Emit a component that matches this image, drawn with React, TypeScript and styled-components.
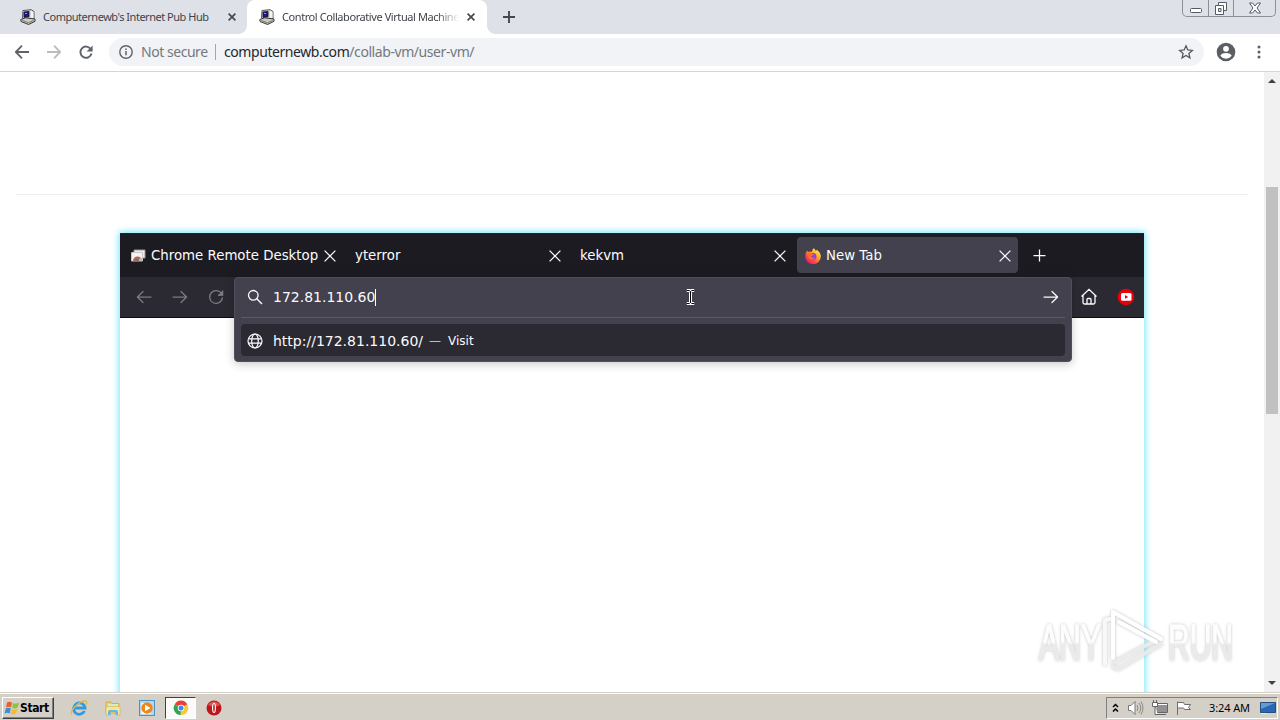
import React from "react";
import styled, { createGlobalStyle, css } from "styled-components";

const GlobalStyle = createGlobalStyle`
  * { box-sizing: border-box; }
  body { margin: 0; overflow: hidden; background: #fff; }
  svg { display: block; flex: none; }
`;

const ui = `"DejaVu Sans Condensed", "DejaVu Sans", sans-serif`;
const guest = `"DejaVu Sans", sans-serif`;

const Screen = styled.div`
  position: relative;
  width: 1280px;
  height: 720px;
  display: flex;
  flex-direction: column;
  overflow: hidden;
`;

/* ---------- Outer browser ---------- */
const TabStrip = styled.header`
  height: 34px;
  flex: none;
  display: flex;
  align-items: stretch;
  background: #dee1e8;
  padding-left: 8px;
`;
const BrowserTab = styled.div<{ $active?: boolean }>`
  position: relative;
  width: ${(p) => (p.$active ? 240 : 239)}px;
  display: flex;
  align-items: center;
  padding: 0 ${(p) => (p.$active ? 12 : 11)}px 0 12px;
  gap: 7px;
  border-radius: 8px 8px 0 0;
  background: ${(p) => (p.$active ? "#fff" : "transparent")};
  ${(p) =>
    p.$active &&
    css`
      &::before,
      &::after {
        content: "";
        position: absolute;
        bottom: 0;
        width: 8px;
        height: 8px;
      }
      &::before {
        left: -8px;
        background: radial-gradient(circle at 0 0, transparent 7.5px, #fff 8px);
      }
      &::after {
        right: -8px;
        background: radial-gradient(circle at 100% 0, transparent 7.5px, #fff 8px);
      }
    `}
`;
const TabLabel = styled.span<{ $track: number; $fade?: boolean }>`
  flex: 1;
  min-width: 0;
  overflow: hidden;
  white-space: nowrap;
  font: 11px/18px "Noto Sans", sans-serif;
  letter-spacing: ${(p) => p.$track}px;
  color: #40444a;
  ${(p) =>
    p.$fade &&
    css`
      mask-image: linear-gradient(to right, #000 155px, transparent 177px);
    `}
`;
const NewTab = styled.div`
  display: flex;
  align-items: center;
  margin-left: 15px;
`;
const Captions = styled.div`
  margin-left: auto;
  margin-right: 4px;
  height: 17px;
  width: 94px;
  display: flex;
  border: 1px solid #8b9099;
  border-top: 0;
  border-radius: 0 0 5px 5px;
`;
const Caption = styled.div<{ $w: number }>`
  width: ${(p) => p.$w}px;
  display: flex;
  justify-content: center;
  & + & { border-left: 1px solid #8b9099; }
`;
const Toolbar = styled.div`
  height: 38px;
  flex: none;
  display: flex;
  align-items: center;
  padding: 0 12px 2px 12px;
  background: #fff;
  border-bottom: 1px solid #d4d5d7;
`;
const ToolButton = styled.div<{ $w?: number }>`
  width: ${(p) => p.$w ?? 32}px;
  flex: none;
  display: flex;
  justify-content: center;
`;
const Omnibox = styled.div`
  width: 1095px;
  flex: none;
  height: 28px;
  margin-left: 13px;
  border-radius: 14px;
  background: #f1f3f6;
  display: flex;
  align-items: center;
  padding: 0 10px 0 9px;
  font: 14px/20px "Noto Sans", sans-serif;
  color: #74787c;
  white-space: nowrap;
`;
const Secure = styled.span`
  margin-left: 7px;
  width: 67px;
  letter-spacing: -0.46px;
`;
const Divider = styled.i`
  width: 1px;
  height: 16px;
  margin: 0 8px 0 7px;
  background: #a3a6aa;
`;
const Address = styled.span`
  flex: 1;
  letter-spacing: -0.43px;
`;
const Host = styled.span`
  color: #24272b;
`;

/* ---------- Web page ---------- */
const Viewport = styled.main`
  flex: 1;
  min-height: 0;
  display: flex;
`;
const Page = styled.div`
  width: 1264px;
  padding: 122px 16px 0;
  overflow: hidden;
`;
const Rule = styled.div`
  height: 1px;
  background: #ececec;
  margin-bottom: 38px;
`;
const Scrollbar = styled.div`
  width: 16px;
  background: #f1f1f1;
  display: flex;
  flex-direction: column;
  align-items: center;
`;
const Arrow = styled.div<{ $down?: boolean }>`
  width: 0;
  height: 0;
  border: 4px solid transparent;
  ${(p) =>
    p.$down
      ? css`border-bottom: 0; border-top-color: #404040; margin: auto 0 7px;`
      : css`border-top: 0; border-bottom-color: #404040; margin-top: 7px;`}
`;
const Thumb = styled.div`
  width: 12px;
  height: 227px;
  margin-top: 104px;
  background: #c1c1c1;
`;

/* ---------- Remote desktop ---------- */
const Remote = styled.section`
  width: 1024px;
  height: 768px;
  margin-left: 104px;
  box-shadow: 0 0 7px 1px #6fe4fb;
  background: #fff;
`;
const GuestTabs = styled.div`
  height: 44px;
  background: #1c1b22;
  border-top: 1px solid #1b2533;
  display: flex;
  align-items: center;
  padding: 0 0 1px 2px;
`;
const GuestTab = styled.div<{ $active?: boolean }>`
  width: ${(p) => (p.$active ? 221 : 225)}px;
  height: 36px;
  display: flex;
  align-items: center;
  gap: 5px;
  padding: 1px ${(p) => (p.$active ? "7.5px 0 8px" : "11.5px 0 8px")};
  border-radius: 4px;
  background: ${(p) => (p.$active ? "#42414d" : "transparent")};
  color: #fbfbfe;
  font: 13.33px/20px ${guest};
  white-space: nowrap;
  span { padding-top: 1px; }
  svg:last-child { margin-left: auto; }
`;
const GuestBar = styled.div`
  position: relative;
  height: 41px;
  background: #2b2a33;
  border-bottom: 1px solid #0c0c0d;
  display: flex;
  align-items: center;
  padding: 0 9px 0 16px;
`;
const GuestNav = styled.div`
  display: flex;
  gap: 20px;
`;
const GuestActions = styled.div`
  display: flex;
  gap: 19px;
  margin-left: auto;
`;
const UrlPopup = styled.div`
  position: absolute;
  left: 114px;
  top: 0;
  width: 838px;
  height: 85px;
  padding: 0 6px;
  background: #42414d;
  border: 1px solid #514f5c;
  border-radius: 4px;
  box-shadow: 0 2px 10px rgba(0, 0, 0, 0.22);
  color: #fbfbfe;
  font: 14px/20px ${guest};
`;
const UrlLine = styled.div`
  height: 40px;
  display: flex;
  align-items: center;
  padding: 0 6px 1px 6px;
  border-bottom: 1px solid #5b5a66;
  gap: 10px;
`;
const Typed = styled.span`
  flex: 1;
`;
const Caret = styled.i`
  display: inline-block;
  width: 1px;
  height: 17px;
  background: #fff;
  vertical-align: -4px;
`;
const Suggestion = styled.div`
  height: 32px;
  margin-top: 6px;
  display: flex;
  align-items: center;
  padding: 1px 6px 0;
  gap: 10px;
  border-radius: 4px;
  background: #2b2a33;
`;
const Visit = styled.span`
  display: flex;
  gap: 7px;
  font-size: 12px;
  margin-left: -4px;
`;
const Dash = styled.span`
  color: #bdbcc6;
`;
const Pointer = styled.div`
  position: absolute;
  left: 566px;
  top: 12px;
`;

/* ---------- Taskbar ---------- */
const Taskbar = styled.footer`
  height: 28px;
  flex: none;
  display: flex;
  align-items: center;
  background: #d4d0c8;
  border-top: 1px solid #d4d0c8;
  box-shadow: inset 0 1px #fff;
  padding: 2px 2px 0 2px;
`;
const Start = styled.div`
  width: 52px;
  height: 22px;
  display: flex;
  align-items: center;
  padding-left: 1px;
  border: 1px solid;
  border-color: #fff #404040 #404040 #fff;
  box-shadow: inset -1px -1px #808080;
  font: bold 12px/16px ${ui};
  letter-spacing: -0.4px;
  color: #000;
`;
const Quick = styled.div<{ $pressed?: boolean }>`
  width: ${(p) => (p.$pressed ? 31 : 34)}px;
  height: 22px;
  display: flex;
  align-items: center;
  justify-content: center;
  ${(p) =>
    p.$pressed &&
    css`
      margin: 0 1px;
      background: #fbfaf8;
      border: 1px solid;
      border-color: #404040 #fff #fff #404040;
    `}
`;
const QuickRow = styled.div`
  display: flex;
  margin-left: 8px;
`;
const Tray = styled.div`
  margin-left: auto;
  width: 172px;
  height: 22px;
  display: flex;
  align-items: center;
  border: 1px solid;
  border-color: #808080 #fff #fff #808080;
  padding: 0 1px 0 5px;
  gap: 7px;
`;
const Clock = styled.span`
  margin-left: 10px;
  margin-right: auto;
  width: 42px;
  white-space: nowrap;
  font: 11px/14px "Noto Sans", sans-serif;
  letter-spacing: -0.1px;
  color: #000;
`;
const Watermark = styled.div`
  position: absolute;
  left: 1030px;
  top: 604px;
`;

const PcIcon = () => (
  <svg width="16" height="16" viewBox="0 0 16 16">
    <path d="M3 1.5 11 0.7l3 1.8v7L6 12 2.5 9z" fill="#d9d8cf" stroke="#42424a" strokeWidth=".9" />
    <path d="M4 3l5-.6v5.4l-5 .6z" fill="#1a1a90" stroke="#111" strokeWidth=".8" />
    <path d="M5 4h2v1H5z" fill="#8d95e0" />
    <path d="M11 1.5l2.5 1.6V9L11 9.8z" fill="#f5f4ec" />
    <path d="M.8 10.5 5.5 8.8 15 10v2.3L8.6 15.5 1 12.5z" fill="#cfcdc2" stroke="#26262c" strokeWidth=".9" />
    <path d="M2.5 11.5l6 2.3 5-2.3" fill="none" stroke="#77756c" />
  </svg>
);
const Cross = ({ s = 8, w = 1.7, c = "#45494e" }) => (
  <svg width={s} height={s} viewBox={`0 0 ${s} ${s}`}>
    <path d={`M.6.6 ${s - 0.6} ${s - 0.6}M${s - 0.6}.6.6 ${s - 0.6}`} stroke={c} strokeWidth={w} fill="none" />
  </svg>
);
const ArrowIcon = ({ right = false, c = "#5f6368" }) => (
  <svg width="14" height="14" viewBox="0 0 14 14">
    <path d={right ? "M0 7h13M7 .7 13.2 7 7 13.3" : "M14 7H1M7 .7.8 7 7 13.3"} fill="none" stroke={c} strokeWidth="1.8" />
  </svg>
);
const GuestArrow = ({ right = false, c = "#7c7b85" }) => (
  <svg width="16" height="16" viewBox="0 0 16 16">
    <path
      d={right ? "M1 8h13.5M9 2.5 14.6 8 9 13.5" : "M15 8H1.5M7 2.5 1.4 8 7 13.5"}
      fill="none" stroke={c} strokeWidth="1.25" strokeLinecap="round" strokeLinejoin="round"
    />
  </svg>
);
const Firefox = () => (
  <svg width="16" height="16" viewBox="0 0 16 16">
    <defs>
      <linearGradient id="fx" x1=".85" y1=".1" x2=".2" y2=".95">
        <stop offset="0" stopColor="#fff04a" /><stop offset=".35" stopColor="#ffa62d" />
        <stop offset=".7" stopColor="#ff4a3f" /><stop offset="1" stopColor="#e31587" />
      </linearGradient>
    </defs>
    <path d="M8.8.2c1 .8 1.6 1.7 2 2.8.6-.3.7-.7.8-1.2 2.5 1.7 4.2 4 4.2 6.6A7.7 7.7 0 0 1 .3 8.5C.2 6.2 1 4.3 2.1 2.6l.9 1.5c.7-.5 1.4-.7 2.3-.7L7 4.1C7 2.5 7.6 1.2 8.8.2z" fill="url(#fx)" />
    <circle cx="8" cy="8.4" r="3.4" fill="#8b45dc" />
    <path d="M2.8 5.2c1.6-.8 3.2-.3 4.3.9l1.8.4c-.5 1.2-2.1 1.2-2.6 2 .5 1.4 2.2 1.6 3.6.6C9.3 12 5.5 12.6 3.6 10z" fill="#ff6a34" />
  </svg>
);

export default function App() {
  return (
    <Screen>
      <GlobalStyle />
      <TabStrip>
        <BrowserTab>
          <PcIcon />
          <TabLabel $track={-0.48}>Computernewb's Internet Pub Hub</TabLabel>
          <Cross />
        </BrowserTab>
        <BrowserTab $active>
          <PcIcon />
          <TabLabel $track={-0.42} $fade>Control Collaborative Virtual Machine</TabLabel>
          <Cross />
        </BrowserTab>
        <NewTab>
          <svg width="14" height="14" viewBox="0 0 14 14"><path d="M7 1v12M1 7h12" stroke="#45494e" strokeWidth="1.9" /></svg>
        </NewTab>
        <Captions>
          <Caption $w={25}>
            <svg width="14" height="16"><rect x="1.5" y="8.5" width="11" height="4" rx="1" fill="#fff" stroke="#555a64" /></svg>
          </Caption>
          <Caption $w={25}>
            <svg width="16" height="16"><path d="M5.5 2.5h8v8h-8z" fill="#fff" stroke="#555a64" /><path d="M2.5 5.5h8v9h-8z" fill="#fff" stroke="#555a64" /><path d="M5.5 8.5h2.5v3H5.5z" fill="#dee1e8" stroke="#555a64" /></svg>
          </Caption>
          <Caption $w={42}>
            <svg width="14" height="16" viewBox="0 0 14 16"><path d="M1.5 3h3L7 6l2.5-3h3L9 8l3.5 5h-3L7 10l-2.5 3h-3L5 8z" fill="#fff" stroke="#555a64" /></svg>
          </Caption>
        </Captions>
      </TabStrip>
      <Toolbar>
        <ToolButton $w={20}><ArrowIcon /></ToolButton>
        <ToolButton $w={44}><ArrowIcon right c="#babcbe" /></ToolButton>
        <ToolButton $w={20}>
          <svg width="14" height="14" viewBox="0 0 14 14"><path d="M11.8 4.2A5.6 5.6 0 1 0 12.5 8.5" fill="none" stroke="#5f6368" strokeWidth="1.9" /><path d="M13.6.4v6H7.6z" fill="#5f6368" /></svg>
        </ToolButton>
        <Omnibox>
          <svg width="16" height="16" viewBox="0 0 16 16"><circle cx="8" cy="8" r="6.2" fill="none" stroke="#5f6368" strokeWidth="1.4" /><path d="M8 7v4.3M8 4.5v1.5" stroke="#5f6368" strokeWidth="1.5" /></svg>
          <Secure>Not secure</Secure>
          <Divider />
          <Address><Host>computernewb.com</Host>/collab-vm/user-vm/</Address>
          <svg width="16" height="16" viewBox="0 0 16 16"><path d="M8 1.8l1.8 4.2 4.5.4-3.4 3 1 4.4L8 11.5l-3.9 2.3 1-4.4-3.4-3 4.5-.4z" fill="none" stroke="#55595e" strokeWidth="1.3" /></svg>
        </Omnibox>
        <ToolButton $w={44}>
          <svg width="20" height="20" viewBox="0 0 20 20"><circle cx="10" cy="10" r="9.3" fill="#5b5f64" /><circle cx="10" cy="6.8" r="2.9" fill="#fff" /><path d="M4.3 13.7c1-2 3.3-2.7 5.7-2.7s4.7.7 5.7 2.7A7 7 0 0 1 10 16.7a7 7 0 0 1-5.7-3z" fill="#fff" /></svg>
        </ToolButton>
        <ToolButton $w={21}>
          <svg width="4" height="16" viewBox="0 0 4 16"><g fill="#5b5f64"><circle cx="2" cy="3" r="1.5" /><circle cx="2" cy="8" r="1.5" /><circle cx="2" cy="13" r="1.5" /></g></svg>
        </ToolButton>
      </Toolbar>

      <Viewport>
        <Page>
          <Rule />
          <Remote>
            <GuestTabs>
              <GuestTab>
                <svg width="16" height="16" viewBox="0 0 16 16"><path d="M4 2h11v8H4z" fill="#eee" stroke="#9a9697" /><path d="M1.5 4.5h11V13h-11z" fill="#f5f2f1" stroke="#c9c4c4" /><path d="M3 13a4.500 4.500 0 0 1 9 0z" fill="#b5645c" /><path d="M8 13a4 4 0 0 1 4-3v3z" fill="#c8b98a" /><circle cx="7.5" cy="12" r="1.5" fill="#6c728a" /></svg>
                <span>Chrome Remote Desktop</span>
                <Cross s={12} w={1.25} c="#fbfbfe" />
              </GuestTab>
              <GuestTab><span>yterror</span><Cross s={12} w={1.25} c="#fbfbfe" /></GuestTab>
              <GuestTab><span>kekvm</span><Cross s={12} w={1.25} c="#fbfbfe" /></GuestTab>
              <GuestTab $active><Firefox /><span>New Tab</span><Cross s={12} w={1.25} c="#fbfbfe" /></GuestTab>
              <NewTab><svg width="13" height="13" viewBox="0 0 13 13"><path d="M6.5.5v12M.5 6.5h12" stroke="#fbfbfe" strokeWidth="1.25" /></svg></NewTab>
            </GuestTabs>
            <GuestBar>
              <GuestNav>
                <GuestArrow />
                <GuestArrow right />
                <svg width="16" height="16" viewBox="0 0 16 16"><path d="M13.8 5.2A6.4 6.4 0 1 0 14.4 8.5M14.6 1.5v4.7H9.9" fill="none" stroke="#7c7b85" strokeWidth="1.3" /><path d="M14.9 1.5v5h-5z" fill="#7c7b85" /></svg>
              </GuestNav>
              <GuestActions>
                <svg width="18" height="17" viewBox="0 0 18 17"><path d="M1.5 8.5 9 1.3l7.5 7.2M3 7.5v7q0 1.5 1.5 1.5h9q1.5 0 1.5-1.5v-7M7 16v-4.5q0-1 1-1h2q1 0 1 1V16" fill="none" stroke="#fbfbfe" strokeWidth="1.3" /></svg>
                <svg width="18" height="18" viewBox="0 0 18 18"><circle cx="9" cy="9" r="8.3" fill="#e80009" /><rect x="4" y="5" width="10.5" height="7.7" rx="1.5" fill="#fff" /><path d="M8 7l3.2 1.9L8 10.8z" fill="#e80009" /></svg>
              </GuestActions>
              <UrlPopup>
                <UrlLine>
                  <svg width="16" height="16" viewBox="0 0 16 16"><circle cx="6.3" cy="6.3" r="4.8" fill="none" stroke="#fbfbfe" strokeWidth="1.3" /><path d="M9.8 9.8 15 15" stroke="#fbfbfe" strokeWidth="1.4" /></svg>
                  <Typed>172.81.110.60<Caret /></Typed>
                  <GuestArrow right c="#fbfbfe" />
                </UrlLine>
                <Suggestion>
                  <svg width="16" height="16" viewBox="0 0 16 16" fill="none" stroke="#fbfbfe" strokeWidth="1.2"><circle cx="8" cy="8" r="7" /><ellipse cx="8" cy="8" rx="3.3" ry="7" /><path d="M1.5 5.8h13M1.5 10.2h13" /></svg>
                  <span>http://172.81.110.60/</span>
                  <Visit><Dash>—</Dash><span>Visit</span></Visit>
                </Suggestion>
              </UrlPopup>
              <Pointer>
                <svg width="9" height="16" viewBox="0 0 9 16"><path d="M.8 1.5h2.5L4.5 2.7 5.7 1.5h2.5M4.5 2.5v11M.8 14.5h2.5L4.5 13.3l1.2 1.2h2.5" fill="none" stroke="#fff" strokeWidth="3" /><path d="M.8 1.5h2.5L4.5 2.7 5.7 1.5h2.5M4.5 2.5v11M.8 14.5h2.5L4.5 13.3l1.2 1.2h2.5" fill="none" stroke="#000" strokeWidth="1" /></svg>
              </Pointer>
            </GuestBar>
          </Remote>
        </Page>
        <Scrollbar><Arrow /><Thumb /><Arrow $down /></Scrollbar>
      </Viewport>

      <Taskbar>
        <Start>
          <svg width="16" height="16" viewBox="0 0 16 16"><path d="M3 2.5q2.5-1.5 5 .2L7 7.5q-2.4-1.4-5 0z" fill="#e8602c" /><path d="M9 3q2.7 1.3 6-.5l-1.3 5q-3 1.6-5.5.4z" fill="#8cc43c" /><path d="M1.8 8.5q2.5-1.4 5 .1l-1.2 4.9q-2.3-1.5-5 0z" fill="#3c8ad8" /><path d="M7.8 9q2.7 1.3 5.7-.3l-1.3 4.9q-2.9 1.5-5.5.3z" fill="#f5bd2c" /></svg>
          Start
        </Start>
        <QuickRow>
          <Quick>
            <svg width="18" height="18" viewBox="0 0 18 18"><path d="M14.5 12a5.7 5.7 0 1 1 .5-3H5" fill="none" stroke="#2e9be2" strokeWidth="2.8" /><path d="M2 15.5C-1 12 9 2 15.5 2q2 .3.7 3.5" fill="none" stroke="#e7b83b" strokeWidth="1.3" /></svg>
          </Quick>
          <Quick>
            <svg width="18" height="18" viewBox="0 0 18 18"><path d="M2 3h5l1 1.5h7V14H2z" fill="#efcf67" stroke="#c99f42" strokeWidth=".7" /><path d="M4 5h10v4H4z" fill="#d7edc0" /><path d="M2 7.5h14V16h-3v-4H6v4H2z" fill="#f8e59a" stroke="#d1ae52" strokeWidth=".6" /><path d="M4 16v-3q0-2 2-2h6q2 0 2 2v3h-2.5v-3h-5v3z" fill="#62b8e5" /></svg>
          </Quick>
          <Quick>
            <svg width="18" height="18" viewBox="0 0 18 18"><rect x="1.5" y="1.5" width="15" height="15" fill="#b5d6ee" stroke="#4a91c7" /><rect x="3.5" y="4" width="9" height="11" fill="#fff" /><circle cx="9" cy="9" r="5.7" fill="#f18518" /><path d="M7 5.7 12.5 9 7 12.3z" fill="#fff" /></svg>
          </Quick>
          <Quick $pressed>
            <svg width="16" height="16" viewBox="0 0 16 16"><path d="M8 8 1.7 4.4A7 7 0 0 1 14.3 4.6z" fill="#e64335" /><path d="M8 8 7.8 15A7 7 0 0 1 1.7 4.4z" fill="#30a551" /><path d="M8 8l6.3-3.4A7 7 0 0 1 7.8 15z" fill="#f9c92f" /><circle cx="8" cy="8" r="3.3" fill="#fff" /><circle cx="8" cy="8" r="2.5" fill="#4285f4" /></svg>
          </Quick>
          <Quick>
            <svg width="16" height="16" viewBox="0 0 16 16"><circle cx="8" cy="8" r="7.5" fill="#bd171b" /><path d="M2 5a7 7 0 0 1 12 0q-6 3-12 0z" fill="#db5552" /><ellipse cx="8" cy="8" rx="2" ry="5" fill="#fff" /><ellipse cx="8" cy="8" rx=".8" ry="4" fill="#b21418" /></svg>
          </Quick>
        </QuickRow>
        <Tray>
          <svg width="8" height="12" viewBox="0 0 8 12"><path d="M1 5l2.5-2.5L6 5M1 9.5 3.5 7 6 9.5" fill="none" stroke="#000" strokeWidth="1.5" /></svg>
          <svg width="17" height="16" viewBox="0 0 17 16"><path d="M1.5 5.5H4l4-4v13l-4-4H1.5z" fill="#fff" stroke="#777" /><path d="M10 5q2 3 0 6M12 3q3.5 5 0 10M14 1.5q4 6.5 0 13" fill="none" stroke="#898989" /></svg>
          <svg width="17" height="16" viewBox="0 0 17 16"><path d="M5.5 4.5h11v8h-11z" fill="#929292" stroke="#fff" /><path d="M5 3.5h11.5v9H5zM7 14.5h8" fill="none" stroke="#666" /><path d="M1.5 2.5h5v4h-5zM4 7v7.5h3" fill="#fff" stroke="#666" /><path d="M2.5 0v2M5.5 0v2" stroke="#666" /></svg>
          <svg width="17" height="16" viewBox="0 0 17 16"><path d="M2.5 15V1.5M2.5 2.5h6l1 2h6l-2 3 2 2h-6l-1-1.5h-6" fill="#fff" stroke="#6e6e6e" /></svg>
          <Clock>3:24 AM</Clock>
          <svg width="16" height="14" viewBox="0 0 16 14"><path d="M.5 1.5h15v10H.5z" fill="#2867b1" stroke="#234f83" /><path d="M1 2h14L1 8z" fill="#659bd0" /><path d="M1 12.5h5" stroke="#eee" /></svg>
        </Tray>
      </Taskbar>

      <Watermark>
        <svg width="220" height="78" viewBox="0 0 220 78">
          <defs>
            <linearGradient id="wm" x1="0" y1="0" x2="0" y2="1">
              <stop offset=".48" stopColor="#fff" stopOpacity=".95" />
              <stop offset=".53" stopColor="#ececec" stopOpacity=".9" />
            </linearGradient>
            <filter id="sh" x="-10%" y="-15%" width="120%" height="130%">
              <feDropShadow dx="0" dy="0" stdDeviation="1.6" floodColor="#777" floodOpacity=".5" />
            </filter>
          </defs>
          <g filter="url(#sh)" fill="url(#wm)" stroke="url(#wm)" strokeWidth="1" fontFamily="Liberation Sans" fontSize="50">
            <text x="9" y="56" textLength="62" lengthAdjust="spacingAndGlyphs">ANY</text>
            <text x="138" y="56" textLength="65" lengthAdjust="spacingAndGlyphs">RUN</text>
          </g>
          <g filter="url(#sh)" fill="none" strokeLinejoin="round" strokeLinecap="round" stroke="#fff" strokeWidth="4">
            <path d="M83 63l5 2 43-25" stroke="#ededed" strokeOpacity=".85" />
            <path d="M83 59l41-22" stroke="#ededed" strokeOpacity=".85" />
            <path d="M75 60V16l5-1" stroke="#f8f8f8" />
            <path d="M83 54V8l48 27" />
            <path d="M89 18l37 20" />
          </g>
        </svg>
      </Watermark>
    </Screen>
  );
}
